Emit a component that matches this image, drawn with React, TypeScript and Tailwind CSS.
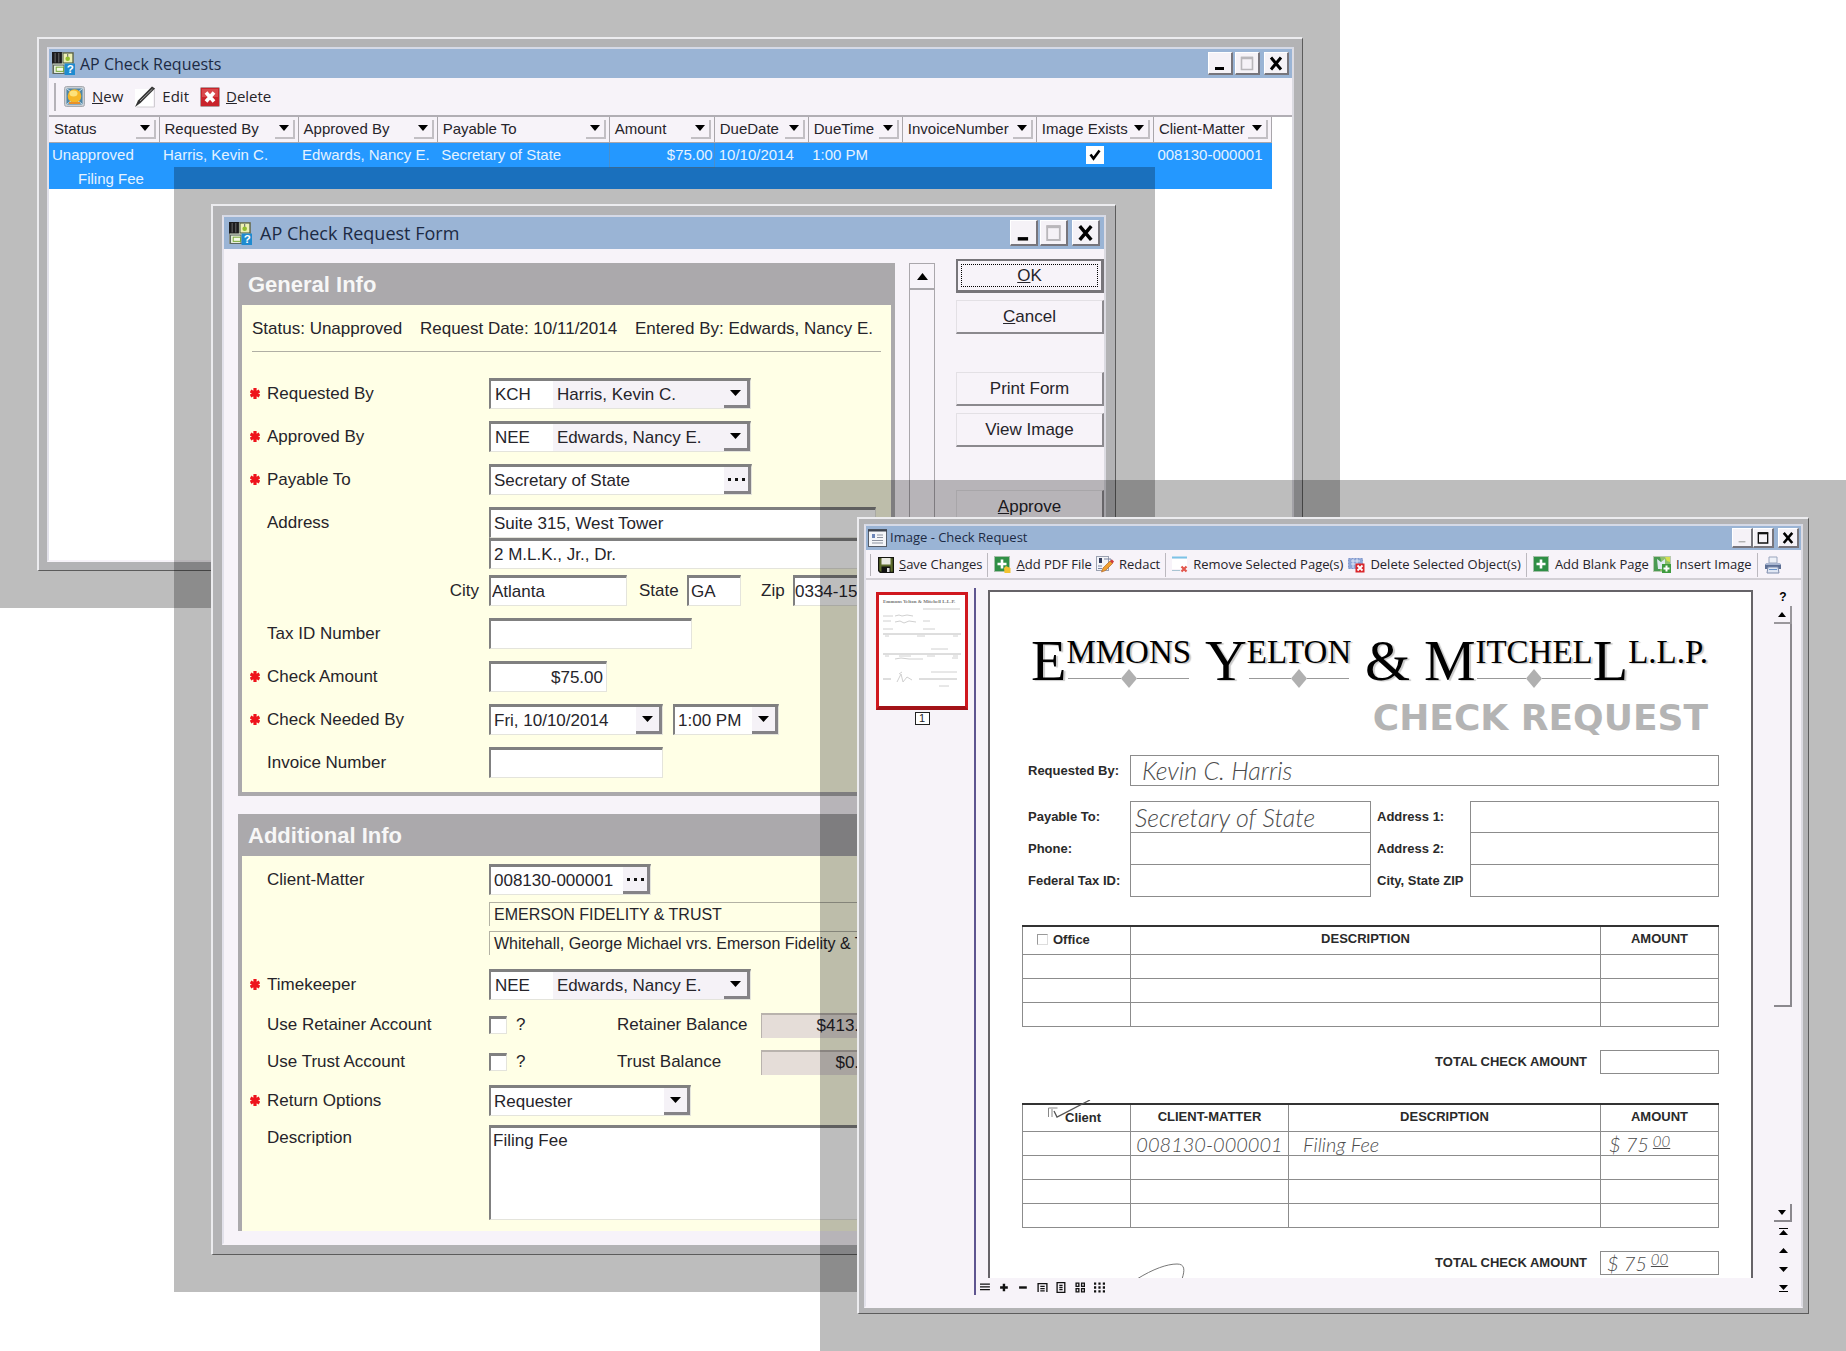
import type { ReactNode } from 'react';

const SANS = "font-['Liberation_Sans',Arial,sans-serif]";
const UI = "font-['Open_Sans','Noto_Sans',sans-serif]";
const HAND = "font-['Lato',sans-serif] font-light italic text-[#4c4c4c] whitespace-nowrap";

const columns = [
  { name: 'Status', width: 'w-[110px]' },
  { name: 'Requested By', width: 'w-[139px]' },
  { name: 'Approved By', width: 'w-[139px]' },
  { name: 'Payable To', width: 'w-[172px]' },
  { name: 'Amount', width: 'w-[105px]' },
  { name: 'DueDate', width: 'w-[94px]' },
  { name: 'DueTime', width: 'w-[94px]' },
  { name: 'InvoiceNumber', width: 'w-[134px]' },
  { name: 'Image Exists', width: 'w-[117px]' },
  { name: 'Client-Matter', width: 'w-[118px]' },
];

export default function App() {
  return (
    <main className={`relative min-h-screen overflow-hidden bg-white text-[#26242a] ${SANS}`}>
      <div className="absolute top-0 right-[506px] left-0 bg-black/26 p-[37px]">
        <RequestsWindow />
      </div>
      <div className="absolute top-[167px] right-[691px] left-[174px] bg-black/26 p-[37px] pr-[39px]">
        <FormWindow />
      </div>
      <div className="absolute top-[480px] right-0 bottom-0 left-[820px] bg-black/26 p-[37px]">
        <ImageWindow />
      </div>
    </main>
  );
}

/* ---------- window chrome ---------- */

function Frame({ pad, children }: { pad: string; children: ReactNode }) {
  return (
    <section
      className={`flex h-full flex-col border-t-2 border-r border-b border-l-2 border-t-[#ececef] border-r-[#5c5c5c] border-b-[#5c5c5c] border-l-[#ececef] bg-[#b3b3b5] ${pad}`}
    >
      <div className="flex min-h-0 flex-1 flex-col border-2 border-t-[#d5d9e6] border-r-[#dcdbe2] border-b-[#f7f3f9] border-l-[#e2e1ea] bg-[#f7f3f9]">
        {children}
      </div>
    </section>
  );
}

function WindowButton({ label, size, children }: { label: string; size: string; children: ReactNode }) {
  return (
    <button
      type="button"
      aria-label={label}
      className={`flex items-center justify-center border-t border-r-2 border-b-2 border-l border-t-white border-r-[#77757c] border-b-[#77757c] border-l-white bg-[#f5f2f7] ${size}`}
    >
      <svg viewBox="0 0 20 20" className="h-full w-full" fill="none">
        {children}
      </svg>
    </button>
  );
}

function WindowButtons({ size, gap, active }: { size: string; gap: string; active?: boolean }) {
  return (
    <div className="ml-auto flex items-center">
      <WindowButton label="Minimize" size={size}>
        <path d={active ? 'M6 15h8' : 'M5 15.500h9'} stroke={active ? '#aaa' : '#000'} strokeWidth={active ? 1.5 : 3} />
      </WindowButton>
      <span className={gap} />
      <WindowButton label="Maximize" size={size}>
        <path d="M4.500 4.500h11v12h-11z" stroke={active ? '#111' : '#b9b7bb'} strokeWidth="1.6" />
        <path d="M4 5h12" stroke={active ? '#111' : '#b9b7bb'} strokeWidth="2.500" />
      </WindowButton>
      <span className="w-1" />
      <WindowButton label="Close" size={size}>
        <path d="M5 4.500l10 12M15 4.500l-10 12" stroke="#000" strokeWidth="3" />
      </WindowButton>
    </div>
  );
}

function AppIcon() {
  return (
    <svg viewBox="0 0 22 22" className="h-[23px] w-[23px] shrink-0" aria-hidden="true">
      <rect x="0.500" y="0.500" width="20" height="20" fill="#e4ecd9" stroke="#8a8f86" />
      <rect x="0" y="0" width="9.500" height="11" fill="#1c1c1e" />
      <path d="M3 1v9M6.500 1v9" stroke="#666" />
      <rect x="10.500" y="1" width="9.500" height="9.500" fill="#edf0b4" stroke="#4d5a40" />
      <circle cx="15" cy="6.500" r="2.200" fill="#93bd2c" />
      <path d="M15 2v2.500" stroke="#666" />
      <rect x="1.500" y="12.500" width="10" height="8" fill="#f5fbe9" stroke="#56635a" />
      <rect x="4" y="14.500" width="7" height="4" fill="none" stroke="#79a83a" />
      <rect x="12" y="11" width="10" height="11" fill="#1e8bd0" />
      <text x="14" y="20.500" fontSize="11" fontWeight="700" fill="#fff">?</text>
    </svg>
  );
}

function Arrow({ up, className = 'h-[6px] w-[11px]' }: { up?: boolean; className?: string }) {
  return (
    <svg viewBox="0 0 12 7" className={className} aria-hidden="true" preserveAspectRatio="none">
      <path d={up ? 'M0 7h12L6 0z' : 'M0 0h12L6 7z'} fill="#000" />
    </svg>
  );
}

/* ---------- AP Check Requests ---------- */

function RequestsWindow() {
  return (
    <Frame pad="p-2">
      <div className="flex h-[29px] items-center bg-[#9ab4d5] pr-[3px] pl-[3px]">
        <AppIcon />
        <h1 className={`ml-[5px] text-[16px] text-[#1c2a44] ${UI}`}>AP Check Requests</h1>
        <WindowButtons size="h-[23px] w-[25px]" gap="w-[2px]" />
      </div>

      <div className={`flex h-[39px] items-center border-b-2 border-[#b1aeb4] pl-[5px] text-[15px] ${UI}`}>
        <span className="mr-2 h-7 w-[2px] bg-[#b5b2b8]" />
        <button type="button" className="flex items-center gap-[7px]">
          <NewIcon />
          <span><u>N</u>ew</span>
        </button>
        <button type="button" className="ml-[11px] flex items-center gap-[6px]">
          <EditIcon />
          <span>Edit</span>
        </button>
        <button type="button" className="ml-[11px] flex items-center gap-[6px]">
          <DeleteIcon />
          <span><u>D</u>elete</span>
        </button>
      </div>

      <div className="min-h-[443px] flex-1 bg-white pr-5">
        <table className="w-full table-fixed border-collapse text-[15px]">
          <thead>
            <tr className="h-[25px] bg-[#f7f3f9]">
              {columns.map((column) => (
                <th key={column.name} className={`border-r border-b border-[#a9a6ab] p-0 text-left font-normal ${column.width}`}>
                  <div className="flex items-center justify-between pr-[3px] pl-[5px] whitespace-nowrap">
                    {column.name}
                    <span className="flex h-[19px] w-5 shrink-0 items-center justify-center border-r-2 border-b-2 border-[#c2bfc4]">
                      <Arrow className="h-[6px] w-[10px]" />
                    </span>
                  </div>
                </th>
              ))}
            </tr>
          </thead>
          <tbody className="bg-[#2498ff] text-[#e6f3ff]">
            <tr className="h-[25px] leading-[23px] whitespace-nowrap">
              <td className="pl-[3px]">Unapproved</td>
              <td className="pl-1">Harris, Kevin C.</td>
              <td className="pl-1">Edwards, Nancy E.</td>
              <td className="pl-1">Secretary of State</td>
              <td className="border border-[#4a8fcb] pr-px text-right">$75.00</td>
              <td className="pl-1">10/10/2014</td>
              <td className="pl-1">1:00 PM</td>
              <td />
              <td>
                <label className="flex h-[18px] justify-center">
                  <input type="checkbox" defaultChecked aria-label="Image Exists" className="peer sr-only" />
                  <span className="flex h-[18px] w-[18px] items-center justify-center bg-white">
                    <svg viewBox="0 0 12 12" className="h-3 w-3" fill="none">
                      <path d="M1.500 5.500l3 4 6-8" stroke="#000" strokeWidth="2.600" />
                    </svg>
                  </span>
                </label>
              </td>
              <td className="pl-1">008130-000001</td>
            </tr>
            <tr className="h-[22px]">
              <td colSpan={10} className="pl-[29px] leading-[21px]">Filing Fee</td>
            </tr>
          </tbody>
        </table>
      </div>
    </Frame>
  );
}

function NewIcon() {
  return (
    <svg viewBox="0 0 21 21" className="h-[21px] w-[21px]">
      <rect x="0.500" y="0.500" width="20" height="20" rx="2" fill="#c9cdd3" stroke="#a8abb0" />
      <rect x="2.500" y="2.500" width="16" height="16" fill="#4c86a8" />
      <path d="M2.500 2.500l5 4M18.500 2.500l-5 4M2.500 18.500l5-4M18.500 18.500l-5-4" stroke="#d7e6ee" />
      <circle cx="10.500" cy="10" r="6.800" fill="#f6b728" />
      <ellipse cx="9.500" cy="7.500" rx="4" ry="3" fill="#fde27a" />
      <path d="M5 17h11" stroke="#e8902a" strokeWidth="2" />
    </svg>
  );
}

function EditIcon() {
  return (
    <svg viewBox="0 0 22 22" className="h-[22px] w-[22px]">
      <path d="M1 3h18v18h-18z" fill="#fff" />
      <path d="M20.500 2v19h-18" fill="none" stroke="#d0cdd2" />
      <path d="M1 21l3-6.500L18 0.500l3 2L6.500 17z" fill="#333" />
      <path d="M6 15L18.500 3" stroke="#a5a5a5" />
    </svg>
  );
}

function DeleteIcon() {
  return (
    <svg viewBox="0 0 20 20" className="h-5 w-5">
      <rect x="0.500" y="0.500" width="19" height="19" rx="1" fill="#c9232b" stroke="#b39a9c" />
      <rect x="2" y="2" width="16" height="8" fill="#d8484c" />
      <path d="M6 5.500l8 9M14 5.500l-8 9" stroke="#fff" strokeWidth="3.600" />
    </svg>
  );
}

/* ---------- AP Check Request Form ---------- */

const BOX = 'border-t-[3px] border-l-2 border-r border-b border-t-[#808080] border-l-[#808080] border-r-[#e4e4dc] border-b-[#e4e4dc] bg-white';

function FormWindow() {
  return (
    <Frame pad="p-[9px]">
      <div className="flex h-8 items-center bg-[#9ab4d5] pr-[4px] pl-[5px]">
        <AppIcon />
        <h2 className={`ml-2 text-[18px] text-[#1c2a44] ${UI}`}>AP Check Request Form</h2>
        <WindowButtons size="h-[26px] w-[28px]" gap="w-[2px]" />
      </div>

      <form className="flex pb-3 pl-[14px] text-[17px]">
        <div className="min-w-0 flex-1 pt-[14px]">
          <Panel title="General Info" closed>
            <div className="mx-[10px] flex h-[47px] items-center justify-between border-b border-[#b0afa4] pt-[2px] pr-[8px] whitespace-nowrap">
              <span>Status: Unapproved</span>
              <span>Request Date: 10/11/2014</span>
              <span>Entered By: Edwards, Nancy E.</span>
            </div>
            <div className="flex flex-col gap-3 pt-[26px] pb-[14px]">
              <Row label="Requested By" id="requested" required>
                <PersonSelect id="requested" code="KCH" name="Harris, Kevin C." />
              </Row>
              <Row label="Approved By" id="approved" required>
                <PersonSelect id="approved" code="NEE" name="Edwards, Nancy E." />
              </Row>
              <Row label="Payable To" id="payable" required>
                <Lookup id="payable" value="Secretary of State" width="w-[263px]" />
              </Row>
              <div>
                <Row label="Address" id="address1">
                  <input id="address1" defaultValue="Suite 315, West Tower" className={`h-[31px] w-[387px] pl-[3px] ${BOX}`} />
                </Row>
                <Row label="" id="address2">
                  <input id="address2" aria-label="Address line 2" defaultValue="2 M.L.K., Jr., Dr." className={`h-[31px] w-[387px] pl-[3px] ${BOX}`} />
                </Row>
                <div className="mt-[6px] flex items-center">
                  <label htmlFor="city" className="w-[247px] pr-[10px] text-right">City</label>
                  <input id="city" defaultValue="Atlanta" className={`h-[31px] w-[138px] pl-px ${BOX}`} />
                  <label htmlFor="state" className="ml-3 w-[48px]">State</label>
                  <input id="state" defaultValue="GA" className={`h-[31px] w-[54px] pl-[2px] ${BOX}`} />
                  <label htmlFor="zip" className="ml-5 w-8">Zip</label>
                  <input id="zip" defaultValue="0334-1530" className={`h-[31px] w-[82px] ${BOX}`} />
                </div>
              </div>
              <Row label="Tax ID Number" id="tax">
                <input id="tax" className={`h-[31px] w-[203px] ${BOX}`} />
              </Row>
              <Row label="Check Amount" id="amount" required>
                <input id="amount" defaultValue="$75.00" className={`h-[31px] w-[118px] pr-[3px] text-right ${BOX}`} />
              </Row>
              <Row label="Check Needed By" id="needed" required>
                <Select id="needed" value="Fri, 10/10/2014" width="w-[174px]" />
                <span className="w-[10px]" />
                <Select id="time" value="1:00 PM" width="w-[106px]" label="Time needed" />
              </Row>
              <Row label="Invoice Number" id="invoice">
                <input id="invoice" className={`h-[31px] w-[174px] ${BOX}`} />
              </Row>
            </div>
          </Panel>

          <div className="h-[18px]" />

          <Panel title="Additional Info">
            <div className="pt-2 pb-[11px]">
              <Row label="Client-Matter" id="matter">
                <Lookup id="matter" value="008130-000001" width="w-[162px]" />
              </Row>
              <ReadOnlyLine text="EMERSON FIDELITY & TRUST" gap="mt-[7px]" />
              <ReadOnlyLine text="Whitehall, George Michael vrs. Emerson Fidelity & Trust" gap="mt-[5px]" />
              <div className="h-[14px]" />
              <Row label="Timekeeper" id="timekeeper" required>
                <PersonSelect id="timekeeper" code="NEE" name="Edwards, Nancy E." />
              </Row>
              <AccountRow label="Use Retainer Account" id="retainer" balance="Retainer Balance" value="$413.00" />
              <AccountRow label="Use Trust Account" id="trust" balance="Trust Balance" value="$0.00" />
              <div className="h-[11px]" />
              <Row label="Return Options" id="options" required>
                <Select id="options" value="Requester" width="w-[202px]" />
              </Row>
              <div className="mt-[9px] flex">
                <label htmlFor="description" className="w-[247px] pl-[25px]">Description</label>
                <textarea id="description" defaultValue="Filing Fee" className={`h-[95px] w-[392px] resize-none pl-[2px] ${BOX}`} />
              </div>
            </div>
          </Panel>
        </div>

        <div className="mt-[14px] ml-[14px] w-[26px] shrink-0 border border-[#aaa7ac]">
          <button type="button" aria-label="Scroll up" className="flex h-[26px] w-full items-center justify-center border-b-2 border-[#aaa7ac]">
            <Arrow up className="h-[7px] w-[11px]" />
          </button>
        </div>

        <div className="ml-[21px] flex w-[148px] shrink-0 flex-col gap-[7px] pt-[10px]">
          <button type="button" className="h-[34px] border-2 border-r-[3px] border-b-[3px] border-[#77757a] p-[3px]">
            <span className="flex h-full items-center justify-center border border-dotted border-black">
              <u>O</u>K
            </span>
          </button>
          <SideButton><u>C</u>ancel</SideButton>
          <div className="h-6" />
          <SideButton>Print Form</SideButton>
          <SideButton>View Image</SideButton>
          <div className="h-[29px]" />
          <SideButton><u>A</u>pprove</SideButton>
        </div>
      </form>
    </Frame>
  );
}

function Panel({ title, closed, children }: { title: string; closed?: boolean; children: ReactNode }) {
  return (
    <section className={`border-r-4 border-l-4 border-[#aba9ac] bg-[#ffffe6] ${closed ? 'border-b-4' : ''}`}>
      <h3 className="flex h-[42px] items-center bg-[#aba9ac] pl-[6px] text-[22px] font-bold text-[#f7f7f7]">{title}</h3>
      {children}
    </section>
  );
}

function Row({ label, id, required, children }: { label: string; id: string; required?: boolean; children: ReactNode }) {
  return (
    <div className="flex items-center">
      <span className="w-[25px] pl-2">{required && <Star />}</span>
      {label ? (
        <label htmlFor={id} className="w-[222px]">{label}</label>
      ) : (
        <span className="w-[222px]" />
      )}
      {children}
    </div>
  );
}

function Star() {
  return (
    <svg viewBox="0 0 10 11" className="h-[11px] w-[10px]" aria-hidden="true">
      <path d="M5 0v11M0.500 3l9 5M9.500 3l-9 5" stroke="#ee141c" strokeWidth="3.200" />
    </svg>
  );
}

function DropArrow() {
  return (
    <span className="pointer-events-none absolute top-0 right-0 bottom-0 flex w-[26px] items-center justify-center border-r-[3px] border-b-[3px] border-[#858387] bg-[#f5f2f7]">
      <Arrow />
    </span>
  );
}

function Select({ id, value, width, label }: { id: string; value: string; width: string; label?: string }) {
  return (
    <div className={`relative h-[31px] ${width} ${BOX}`}>
      <select id={id} aria-label={label} className="h-full w-full appearance-none pl-[3px]">
        <option>{value}</option>
      </select>
      <DropArrow />
    </div>
  );
}

function PersonSelect({ id, code, name }: { id: string; code: string; name: string }) {
  return (
    <div className={`relative flex h-[31px] w-[262px] ${BOX}`}>
      <input aria-label={`${name} code`} defaultValue={code} className="w-[62px] pl-1" />
      <select id={id} className="flex-1 appearance-none bg-[#f5f2f7] pl-1">
        <option>{name}</option>
      </select>
      <DropArrow />
    </div>
  );
}

function Lookup({ id, value, width }: { id: string; value: string; width: string }) {
  return (
    <div className={`flex h-[31px] ${width} ${BOX}`}>
      <input id={id} defaultValue={value} className="min-w-0 flex-1 pl-[3px]" />
      <button type="button" aria-label="Browse" className="flex w-[27px] items-center justify-center border-r-[3px] border-b-[3px] border-[#858387] bg-[#f5f2f7]">
        <svg viewBox="0 0 17 3" className="h-[3px] w-[17px]">
          <path d="M0 0h3v3h-3zM7 0h3v3h-3zM14 0h3v3h-3z" fill="#111" />
        </svg>
      </button>
    </div>
  );
}

function ReadOnlyLine({ text, gap }: { text: string; gap: string }) {
  return (
    <div className={`ml-[247px] h-6 border-t border-l border-[#b3b2a4] pl-[4px] text-[16px] leading-6 whitespace-nowrap ${gap}`}>
      {text}
    </div>
  );
}

function AccountRow({ label, id, balance, value }: { label: string; id: string; balance: string; value: string }) {
  return (
    <div className="mt-[13px] flex h-6 items-center pl-[25px]">
      <label htmlFor={id} className="w-[222px]">{label}</label>
      <input id={id} type="checkbox" className={`h-[18px] w-[18px] appearance-none ${BOX}`} />
      <span className="ml-[9px] w-[101px]">?</span>
      <label htmlFor={`${id}-balance`} className="w-[144px]">{balance}</label>
      <input
        id={`${id}-balance`}
        readOnly
        value={value}
        className="h-[25px] w-[120px] border-t-2 border-l border-[#b9b3ad] bg-[#e5ddd8] pr-[3px] text-right"
      />
    </div>
  );
}

function SideButton({ children }: { children: ReactNode }) {
  return (
    <button
      type="button"
      className="h-[34px] border-t border-r-2 border-b-2 border-l border-t-[#e3e0e5] border-r-[#8b898e] border-b-[#8b898e] border-l-[#e3e0e5]"
    >
      {children}
    </button>
  );
}

/* ---------- Image - Check Request ---------- */

function ImageWindow() {
  return (
    <Frame pad="p-[5px]">
      <div className="flex h-6 shrink-0 items-center bg-[#9ab4d5] px-[2px]">
        <svg viewBox="0 0 19 18" className="h-[18px] w-[19px]" aria-hidden="true">
          <rect x="0.500" y="0.500" width="18" height="17" fill="#f4f5f8" stroke="#555c68" />
          <path d="M0 1.500h19" stroke="#3d434e" strokeWidth="2" />
          <path d="M4 5h3v4h-3z" fill="#6d86b8" />
          <path d="M9 6h6M9 8.500h6M4 11.500h11M4 14h11" stroke="#8d93a0" />
        </svg>
        <h2 className={`ml-[3px] text-[13px] text-[#1c2a44] ${UI}`}>Image - Check Request</h2>
        <WindowButtons size="h-5 w-[21px]" gap="w-0" active />
      </div>

      <div className={`flex h-[30px] shrink-0 items-center border-b-2 border-[#d2cfd5] pt-px pl-1 text-[13px] whitespace-nowrap ${UI}`}>
        <span className="mr-[7px] h-[22px] w-px bg-[#b5b2b8]" />
        <Tool icon={<SaveIcon />}><u>S</u>ave Changes</Tool>
        <Divider />
        <Tool icon={<PlusIcon badge />}><u>A</u>dd PDF File</Tool>
        <Tool icon={<RedactIcon />} next>Redact</Tool>
        <Divider />
        <Tool icon={<RemoveIcon />}>Remove Selected Page(s)</Tool>
        <Tool icon={<DeleteObjectIcon />} next>Delete Selected Object(s)</Tool>
        <Divider />
        <Tool icon={<PlusIcon />}>Add Blank Page</Tool>
        <Tool icon={<InsertIcon />} next>Insert Image</Tool>
        <Divider />
        <button type="button" aria-label="Print">
          <PrintIcon />
        </button>
      </div>

      <div className="flex min-h-0 flex-1 pt-2">
        <div className="flex w-[108px] shrink-0 flex-col items-center pt-1 pl-1">
          <Thumbnail />
          <span className="mt-[2px] flex h-[13px] w-[15px] items-center justify-center border border-[#222] bg-white text-[11px]">1</span>
        </div>
        <div className="mb-[11px] w-[2px] bg-[#5f5590]" />

        <div className="flex min-w-0 flex-1 flex-col pt-[2px] pl-3">
          <div className="min-h-0 flex-1 overflow-hidden border-t-2 border-r-2 border-l-2 border-[#666368] bg-white">
            <CheckRequestPage />
          </div>
          <ViewTools />
        </div>

        <div className="ml-[21px] flex w-[18px] shrink-0 flex-col items-center text-[12px] font-bold text-black">
          <span className="leading-[18px]">?</span>
          <button type="button" aria-label="Scroll up" className="flex h-[18px] w-full shrink-0 items-center justify-center border-r-2 border-b-2 border-[#9a979c]">
            <Arrow up className="h-[5px] w-2" />
          </button>
          <div className="h-[383px] w-full shrink-0 border-r-2 border-b-2 border-[#8b888e]" />
          <button type="button" aria-label="Scroll down" className="mt-auto flex h-[18px] w-full shrink-0 items-center justify-center border-r-2 border-b-2 border-[#8b888e]">
            <Arrow className="h-[5px] w-2" />
          </button>
          <PageStep label="First page" up bar />
          <PageStep label="Previous page" up />
          <PageStep label="Next page" />
          <PageStep label="Last page" bar />
          <div className="h-2" />
        </div>
        <div className="w-[9px]" />
      </div>
    </Frame>
  );
}

function Tool({ icon, next, children }: { icon: ReactNode; next?: boolean; children: ReactNode }) {
  return (
    <button type="button" className={`flex items-center gap-[5px] ${next ? 'ml-1' : ''}`}>
      {icon}
      <span>{children}</span>
    </button>
  );
}

function Divider() {
  return <span className="mr-[6px] ml-[5px] h-[24px] w-px bg-[#bcb9bf]" />;
}

function PageStep({ label, up, bar }: { label: string; up?: boolean; bar?: boolean }) {
  return (
    <button type="button" aria-label={label} className="flex h-[19px] shrink-0 flex-col items-center justify-center gap-px">
      {bar && up && <span className="h-px w-[9px] bg-black" />}
      <Arrow up={up} className="h-[5px] w-[9px]" />
      {bar && !up && <span className="h-px w-[9px] bg-black" />}
    </button>
  );
}

function ViewTools() {
  const icons: [string, string][] = [
    ['Menu', 'M0 2h9M0 4.500h9M0 7h9'],
    ['Zoom in', 'M4.500 1.500v7M1 5h7'],
    ['Zoom out', 'M1 5h7'],
    ['Fit width', 'M1 9V1.500h8V9M3 4h4M3 6h4M3 8h4'],
    ['Fit page', 'M1 .5h7v9h-7zM3 3h3M3 5h3M3 7h3'],
    ['Four pages', 'M1 1h2.500v3h-2.500zM6 1h2.500v3h-2.500zM1 6h2.500v3h-2.500zM6 6h2.500v3h-2.500z'],
    ['Thumbnails', 'M0 1.500h2M4 1.500h2M8 1.500h2M0 5h2M4 5h2M8 5h2M0 8.500h2M4 8.500h2M8 8.500h2'],
  ];
  return (
    <div className="-ml-2 flex h-[28px] shrink-0 items-start gap-2 pt-1">
      {icons.map(([name, d]) => (
        <button key={name} type="button" aria-label={name}>
          <svg viewBox="0 0 10 10" className="h-[11px] w-[11px]" fill="none" stroke="#111" strokeWidth={/Zoom|Thumb/.test(name) ? 2.2 : 1.2}>
            <path d={d} />
          </svg>
        </button>
      ))}
    </div>
  );
}

function Thumbnail() {
  return (
    <button type="button" aria-label="Page 1" className="h-[118px] w-[92px] shrink-0 border-[3px] border-b-4 border-[#d0181f] border-b-[#a31218] bg-white">
      <svg viewBox="0 0 86 111" className="h-full w-full" fill="none" stroke="#d0d0d0">
        <text x="4" y="8" fontSize="5" fontWeight="700" fill="#777" stroke="none" fontFamily="Liberation Serif">
          Emmons Yelton &amp; Mitchell L.L.P.
        </text>
        <path d="M44 14h37" strokeWidth="2" stroke="#e6e6e6" />
        <path d="M4 21h10M4 26h8M4 34h10M44 26h7M44 34h12" />
        <path d="M16 21l4-1 3 1 5-1 6 1M16 27l5-1 4 2 5-2 7 1" />
        <path d="M4 39h78M4 59h78" stroke="#bcbcbc" />
        <path d="M6 41h4M38 41h8M74 41h5M52 54h17M6 61h4M20 61h12M48 61h8M74 61h5" />
        <path d="M16 64l6-1 8 1h14M73 63h6M52 77h26" />
        <path d="M4 84h8M40 84h38" stroke="#bcbcbc" />
        <path d="M18 87l4-8 2 8 4-5 5 3M20 79l3-2M60 91h10" />
      </svg>
    </button>
  );
}

/* ---------- scanned page ---------- */

const LINE = 'border-[#8c8c8c]';

function CheckRequestPage() {
  return (
    <article className="px-8 pt-[40px] text-[13px] font-bold text-[#2a2a2a]">
      <h3 className="flex justify-between pr-[11px] pl-[9px] font-['Liberation_Serif',serif] font-normal text-black text-shadow-[2px_1px_1px_#c8c8c8]">
        <span className="flex">
          <Capital>E</Capital>
          <SmallCaps ruled>MMONS</SmallCaps>
        </span>
        <span className="flex">
          <Capital>Y</Capital>
          <SmallCaps ruled>ELTON</SmallCaps>
        </span>
        <Capital>&amp;</Capital>
        <span className="flex">
          <Capital>M</Capital>
          <SmallCaps ruled>ITCHEL</SmallCaps>
          <Capital>L</Capital>
          <SmallCaps>L.L.P.</SmallCaps>
        </span>
      </h3>
      <p className="mt-2 pr-[11px] text-right font-['DejaVu_Sans',sans-serif] text-[36px] leading-10 font-bold text-[#b4b4b4]">CHECK REQUEST</p>

      <div className="mt-[17px] flex h-[31px]">
        <span className="flex w-[108px] items-center pl-[6px]">Requested By:</span>
        <span className={`flex flex-1 items-center border pl-[11px] text-[25px] leading-none ${LINE} ${HAND}`}>Kevin C. Harris</span>
      </div>

      <div className="mt-[15px] grid grid-cols-[108px_241px_99px_1fr]">
        <Line label="Payable To:" value="Secretary of State" first />
        <Line label="Address 1:" first />
        <Line label="Phone:" />
        <Line label="Address 2:" />
        <Line label="Federal Tax ID:" />
        <Line label="City, State ZIP" />
      </div>

      <table className="mt-[28px] w-full table-fixed border-collapse">
        <thead>
          <tr className="h-[28px] border-t-2 border-t-[#333]">
            <th className={`w-[108px] border-x border-b pb-px ${LINE}`}>
              <span className="flex items-center gap-[5px] pl-[14px]">
                <span className="h-[11px] w-[11px] border border-[#999] border-b-[#ddd] border-r-[#ddd]" />
                Office
              </span>
            </th>
            <th className={`border-x border-b pb-[3px] ${LINE}`}>DESCRIPTION</th>
            <th className={`w-[118px] border-x border-b pb-[3px] ${LINE}`}>AMOUNT</th>
          </tr>
        </thead>
        <tbody>
          {[1, 2, 3].map((row) => (
            <tr key={row} className="h-6">
              <td className={`border ${LINE}`} />
              <td className={`border ${LINE}`} />
              <td className={`border ${LINE}`} />
            </tr>
          ))}
        </tbody>
      </table>

      <Total gap="mt-[23px]" />

      <table className="mt-[29px] w-full table-fixed border-collapse">
        <thead>
          <tr className="h-[28px] border-t-2 border-t-[#333]">
            <th className={`w-[108px] border-x border-b ${LINE}`}>
              <span className="relative flex items-center pl-[42px]">
                <svg viewBox="0 0 44 24" className="absolute -top-2 left-[24px] h-6 w-[44px]" fill="none" stroke="#888">
                  <path d="M1.500 17v-9h9M5 17v-8" />
                  <path d="M7 11l3 6L43 0" stroke="#555" strokeWidth="1.300" />
                </svg>
                Client
              </span>
            </th>
            <th className={`w-[158px] border-x border-b pb-[3px] ${LINE}`}>CLIENT-MATTER</th>
            <th className={`border-x border-b pb-[3px] ${LINE}`}>DESCRIPTION</th>
            <th className={`w-[118px] border-x border-b pb-[3px] ${LINE}`}>AMOUNT</th>
          </tr>
        </thead>
        <tbody>
          <tr className={`h-6 text-[20px] leading-5 ${HAND}`}>
            <td className={`border ${LINE}`} />
            <td className={`border p-0 text-center slashed-zero ${LINE}`}>008130-000001</td>
            <td className={`border p-0 pl-[14px] ${LINE}`}>Filing Fee</td>
            <td className={`border p-0 pl-2 ${LINE}`}>
              <Amount />
            </td>
          </tr>
          {[1, 2, 3].map((row) => (
            <tr key={row} className="h-6">
              <td className={`border ${LINE}`} />
              <td className={`border ${LINE}`} />
              <td className={`border ${LINE}`} />
              <td className={`border ${LINE}`} />
            </tr>
          ))}
        </tbody>
      </table>

      <div className="relative">
        <Total gap="mt-[23px]" filled />
        <svg viewBox="0 0 50 16" className="absolute top-3 left-[115px] h-4 w-[50px]" fill="none" stroke="#777">
          <path d="M0 16C16 6 30 1 40 1c8 0 8 6 5 15" />
        </svg>
      </div>
    </article>
  );
}

function Capital({ children }: { children: ReactNode }) {
  return <span className="text-[58px] leading-none">{children}</span>;
}

function SmallCaps({ ruled, children }: { ruled?: boolean; children: ReactNode }) {
  return (
    <span className="flex flex-col pt-1 text-[33px] leading-none">
      {children}
      {ruled && (
        <span className="flex items-center px-[2px]">
          <span className="h-px flex-1 bg-[#999]" />
          <svg viewBox="0 0 16 19" className="h-[19px] w-4">
            <path d="M8 0l8 9.500-8 9.500-8-9.500z" fill="#b0b0b0" />
          </svg>
          <span className="h-px flex-1 bg-[#999]" />
        </span>
      )}
    </span>
  );
}

function Line({ label, value, first }: { label: string; value?: string; first?: boolean }) {
  return (
    <>
      <span className="flex h-8 items-center pl-[6px]">{label}</span>
      <span className={`flex h-8 items-center border-r border-b border-l pl-1 text-[25px] leading-none ${first ? 'border-t' : ''} ${LINE} ${HAND}`}>
        {value}
      </span>
    </>
  );
}

function Total({ gap, filled }: { gap: string; filled?: boolean }) {
  return (
    <div className={`flex items-center justify-end ${gap}`}>
      <span className="mr-[13px]">TOTAL CHECK AMOUNT</span>
      <span className={`h-6 w-[119px] border pl-[6px] text-[20px] leading-[22px] ${LINE} ${HAND}`}>{filled && <Amount />}</span>
    </div>
  );
}

function Amount() {
  return (
    <span className="flex">
      <span>$ 75</span>
      <span className="ml-1 text-[15px] leading-[15px] underline">00</span>
    </span>
  );
}

/* ---------- toolbar icons ---------- */

function SaveIcon() {
  return (
    <svg viewBox="0 0 16 16" className="h-4 w-4">
      <path d="M0.500 0.500h15v15h-13l-2-2z" fill="#5c6b2c" stroke="#14150f" strokeWidth="1.500" />
      <rect x="3.500" y="1" width="9" height="6.500" fill="#e9e9e2" />
      <rect x="3.500" y="9.500" width="9" height="6" fill="#111" />
      <rect x="9" y="11" width="2.500" height="4" fill="#ddd" />
    </svg>
  );
}

function PlusIcon({ badge }: { badge?: boolean }) {
  return (
    <svg viewBox="0 0 17 17" className="h-[17px] w-[17px]">
      <rect x="0.500" y="0.500" width="15" height="15" fill="#2f8f46" stroke="#a5bfa9" />
      <path d="M8 3.500v9M3.500 8h9" stroke="#fff" strokeWidth="2.600" />
      {badge && <path d="M10 12l2-2 2 1 2.500 1v5h-6z" fill="#f2c230" />}
    </svg>
  );
}

function RedactIcon() {
  return (
    <svg viewBox="0 0 18 17" className="h-[17px] w-[18px]">
      <rect x="0.500" y="0.500" width="12" height="14" fill="#f3f4f8" stroke="#9aa0b0" />
      <path d="M3 2h3v5h-3z" fill="#333c5c" />
      <path d="M8 3h7v4h-3M2 10h4M2 12.500h4" stroke="#7c86a3" fill="none" />
      <path d="M5.500 16l1.500-4 7-7 2.500 2.500-7 7z" fill="#f0a030" stroke="#b0662a" strokeWidth="0.700" />
      <path d="M14 5l2.500 2.500 1.500-2-2-2z" fill="#d03a3a" />
    </svg>
  );
}

function RemoveIcon() {
  return (
    <svg viewBox="0 0 16 17" className="h-[17px] w-4">
      <path d="M0 1.500h15" stroke="#7cc3e6" strokeWidth="2" />
      <rect x="0" y="3" width="15" height="10" fill="#fff" />
      <path d="M0 14.500h8" stroke="#a9c4d2" />
      <path d="M9.500 10.500l5 5M14.500 10.500l-5 5" stroke="#e2564c" strokeWidth="2.200" />
    </svg>
  );
}

function DeleteObjectIcon() {
  return (
    <svg viewBox="0 0 18 17" className="h-[17px] w-[18px]">
      <rect x="1.500" y="2.500" width="14" height="10" fill="#8ea6d8" stroke="#8298cc" strokeDasharray="2 1" />
      <path d="M4 5h9M4 8h6M6 3v9M10 3v9" stroke="#dfe7f7" />
      <rect x="8.500" y="7.500" width="9" height="9" fill="#d9262c" />
      <path d="M10.500 9.500l5 5M15.500 9.500l-5 5" stroke="#fff" strokeWidth="1.800" />
    </svg>
  );
}

function InsertIcon() {
  return (
    <svg viewBox="0 0 18 17" className="h-[17px] w-[18px]">
      <rect x="0.500" y="0.500" width="17" height="15" fill="#8fc06a" stroke="#b8c9b0" />
      <path d="M1 1h6l2 6-2 8H1z" fill="#4a9a52" />
      <path d="M4 3l4 3 4-3v10H5z" fill="#dfeaf0" />
      <path d="M12 1h5v5l-3-1z" fill="#d4e052" />
      <rect x="9" y="8" width="9" height="9" fill="#3f9b3f" />
      <path d="M13.500 9.500v6M10.500 12.500h6" stroke="#fff" strokeWidth="2" />
    </svg>
  );
}

function PrintIcon() {
  return (
    <svg viewBox="0 0 18 18" className="h-[18px] w-[18px]">
      <path d="M5 1h8v6H5z" fill="#eef1f8" stroke="#9aa5bd" />
      <path d="M1 8h16v5H1z" fill="#5d6f95" />
      <path d="M2 7h14l1 2H1z" fill="#a8b5d0" />
      <path d="M4 11h10l1 6H3z" fill="#dfe6f3" stroke="#7d8bab" />
      <path d="M5 13.500h8" stroke="#6a94cc" />
    </svg>
  );
}
